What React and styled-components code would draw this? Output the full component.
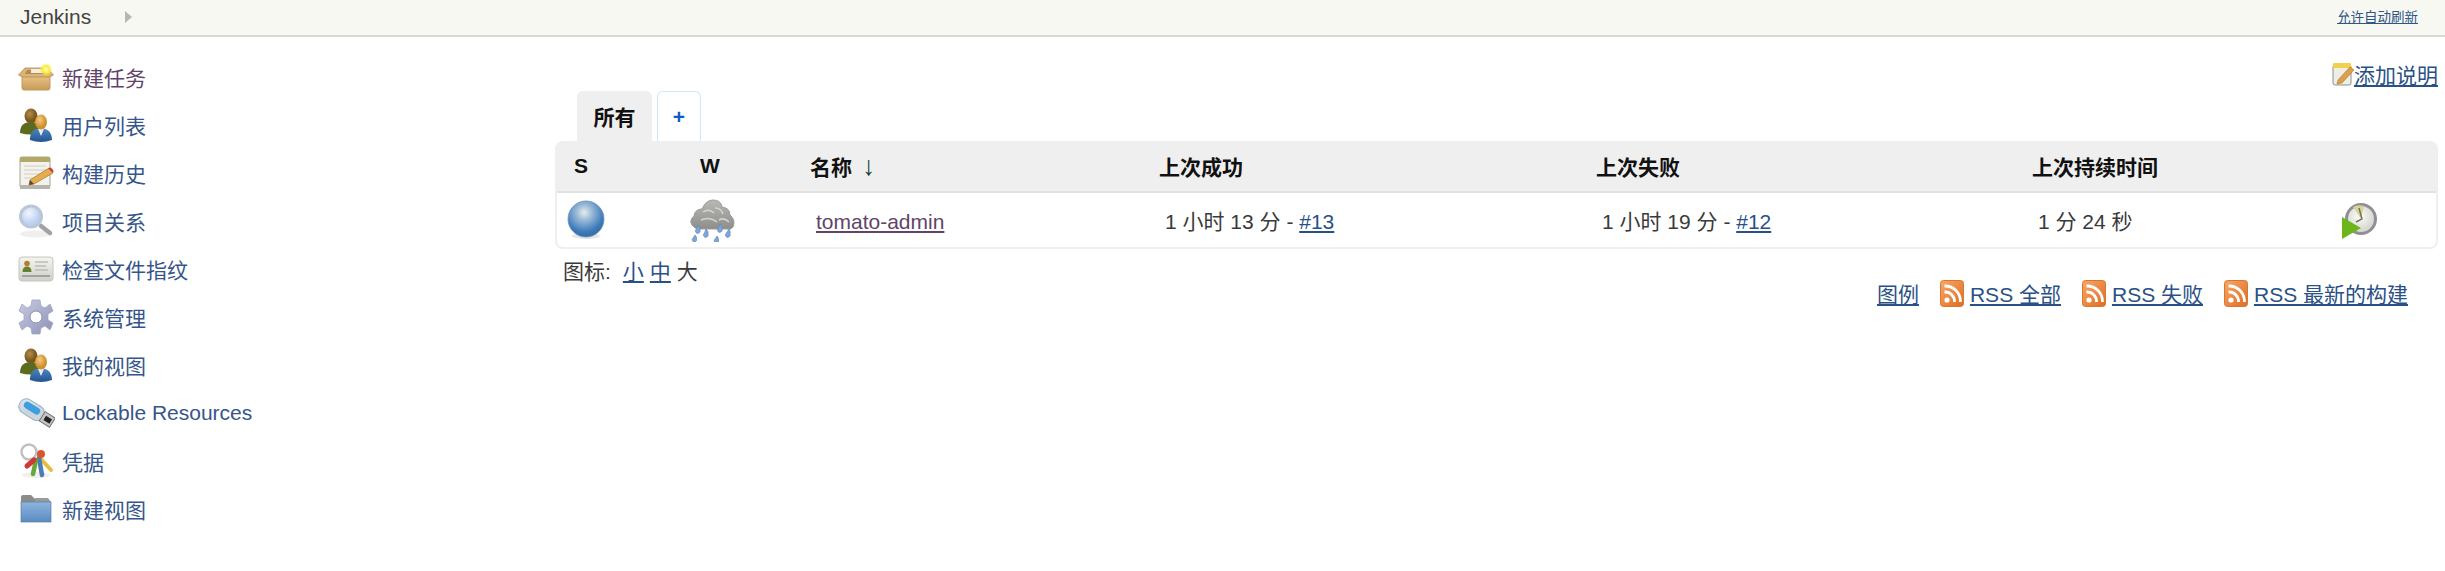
import React from 'react';
import styled, { createGlobalStyle } from 'styled-components';

const GlobalStyle = createGlobalStyle`
  html, body {
    margin: 0;
    padding: 0;
    background: #fff;
  }
  body {
    font-family: "Liberation Sans", "Noto Sans CJK SC", sans-serif;
    color: #3a3a3a;
  }
`;

const Svg = styled.svg`
  display: block;
  flex: none;
`;

const NewJobIcon = () => (
  <Svg width="36" height="28" viewBox="0 0 36 28">
    <defs>
      <linearGradient id="box" x1="0" y1="0" x2="0" y2="1">
        <stop offset="0" stopColor="#ecc98f" />
        <stop offset="1" stopColor="#c99a55" />
      </linearGradient>
      <radialGradient id="spark">
        <stop offset="0" stopColor="#fffcc0" />
        <stop offset="0.55" stopColor="#f6ee3a" />
        <stop offset="1" stopColor="#f6ee3a" stopOpacity="0" />
      </radialGradient>
    </defs>
    <path d="M4 11 H32 V25 Q32 27 30 27 H6 Q4 27 4 25 Z" fill="url(#box)" stroke="#c09a60" />
    <path d="M0.5 12 L7 5 H29 L35.5 12 L31 14 H5 Z" fill="#dcb478" stroke="#b58a4c" strokeWidth="0.8" />
    <path d="M9 7 H27 L29 11 H7 Z" fill="#8f6a3a" opacity="0.55" />
    <path d="M13 6 H24 L25 10 H13 Z" fill="#f3eee0" />
    <circle cx="28" cy="6.5" r="6.5" fill="url(#spark)" />
  </Svg>
);

const PeopleIcon = () => (
  <Svg width="34" height="34" viewBox="0 0 34 34">
    <defs>
      <radialGradient id="headA" cx="0.4" cy="0.35">
        <stop offset="0" stopColor="#b98c48" />
        <stop offset="1" stopColor="#76541c" />
      </radialGradient>
      <radialGradient id="headB" cx="0.4" cy="0.35">
        <stop offset="0" stopColor="#f5cc85" />
        <stop offset="1" stopColor="#d08f2f" />
      </radialGradient>
      <linearGradient id="suit" x1="0" y1="0" x2="0" y2="1">
        <stop offset="0" stopColor="#5587c0" />
        <stop offset="1" stopColor="#1f5592" />
      </linearGradient>
    </defs>
    <ellipse cx="12" cy="8" rx="6.5" ry="7.5" fill="url(#headA)" />
    <path d="M1 25 Q1 14 12 14 Q22 14 22 25 Q12 28 1 25 Z" fill="#5b6b1e" />
    <path d="M11 32 Q10 21 22 20 Q33 21 33 32 Q22 36 11 32 Z" fill="url(#suit)" />
    <path d="M19 21 L22 28 L25 21 Z" fill="#e8eef6" />
    <ellipse cx="22" cy="14" rx="6" ry="7.5" fill="url(#headB)" />
  </Svg>
);

const NotepadIcon = () => (
  <Svg width="36" height="34" viewBox="0 0 36 34">
    <rect x="2" y="1" width="30" height="31" rx="2" fill="#f3f2ec" stroke="#a4a49c" />
    <rect x="2" y="1" width="30" height="5" fill="#b3a866" />
    <path d="M6 10 H28 M6 14 H28 M6 18 H22 M6 22 H16" stroke="#cfcfc8" strokeWidth="1" />
    <rect x="2" y="29" width="30" height="4" fill="#b5b5ae" />
    <path d="M12 24 L31 12 L35 17 L16 28 L11 29 Z" fill="#e5ad4f" stroke="#a87423" strokeWidth="0.7" />
    <path d="M30 12.5 L32 11.5 Q34 11.5 35.5 15 L35 17 Z" fill="#c8443a" />
    <path d="M12 24 L16 28 L11 29 Z" fill="#5c4a32" />
  </Svg>
);

const SearchIcon = () => (
  <Svg width="36" height="34" viewBox="0 0 36 34">
    <defs>
      <radialGradient id="lens" cx="0.4" cy="0.35">
        <stop offset="0" stopColor="#f2f6fe" />
        <stop offset="1" stopColor="#bcd0f0" />
      </radialGradient>
    </defs>
    <ellipse cx="17" cy="30" rx="15" ry="3.5" fill="#efefef" />
    <path d="M23 22 L32 29" stroke="#a2a2a2" strokeWidth="4.5" strokeLinecap="round" />
    <circle cx="13" cy="12.5" r="10.5" fill="url(#lens)" stroke="#bcc6da" strokeWidth="3" />
  </Svg>
);

const FingerprintIcon = () => (
  <Svg width="36" height="26" viewBox="0 0 36 26">
    <defs>
      <linearGradient id="card" x1="0" y1="0" x2="0" y2="1">
        <stop offset="0" stopColor="#f4f4f0" />
        <stop offset="1" stopColor="#d0d0ca" />
      </linearGradient>
    </defs>
    <rect x="1" y="1" width="34" height="24" rx="3" fill="url(#card)" stroke="#c6c6c0" />
    <circle cx="9" cy="7.5" r="2.8" fill="#b07f32" />
    <path d="M4.5 16 Q4.5 10.5 9 10.5 Q13.5 10.5 13.5 16 Z" fill="#67802c" />
    <path d="M17 6 H30 M17 10 H28 M17 14 H30" stroke="#bdbdb6" strokeWidth="1.3" />
    <path d="M4 20 H32" stroke="#a2a29c" strokeWidth="2" />
  </Svg>
);

const GearIcon = () => (
  <Svg width="36" height="36" viewBox="0 0 36 36">
    <defs>
      <linearGradient id="gear" x1="0" y1="0" x2="1" y2="1">
        <stop offset="0" stopColor="#c9cbe2" />
        <stop offset="1" stopColor="#8d91b4" />
      </linearGradient>
    </defs>
    <path
      d="M14 1 H22 L23 7 L27 9 L32 5 L35 12 L30 15 V21 L35 24 L32 31 L27 27 L23 29 L22 35 H14 L13 29 L9 27 L4 31 L1 24 L6 21 V15 L1 12 L4 5 L9 9 L13 7 Z"
      fill="url(#gear)"
      stroke="#a2a5c2"
      strokeWidth="0.8"
      strokeLinejoin="round"
    />
    <circle cx="18" cy="18" r="6" fill="#fff" stroke="#8c90b2" />
  </Svg>
);

const UsbIcon = () => (
  <Svg width="37" height="33" viewBox="0 0 37 33">
    <defs>
      <linearGradient id="usb" x1="0" y1="0" x2="1" y2="1">
        <stop offset="0" stopColor="#dcebf8" />
        <stop offset="0.6" stopColor="#c8d4de" />
        <stop offset="1" stopColor="#d8d8d8" />
      </linearGradient>
    </defs>
    <g transform="rotate(32 18 16)">
      <rect x="-1" y="8" width="27" height="15" rx="7" fill="url(#usb)" stroke="#9ab0c2" />
      <rect x="3" y="10.5" width="18" height="7" rx="3.5" fill="#3f9fdd" />
      <rect x="25" y="10" width="12" height="11" fill="#c4c4c4" stroke="#777" />
      <rect x="28" y="13" width="7" height="5" fill="#222" />
    </g>
  </Svg>
);

const KeysIcon = () => (
  <Svg width="36" height="36" viewBox="0 0 36 36">
    <ellipse cx="18" cy="32" rx="14" ry="3" fill="#f0f0f0" />
    <circle cx="11" cy="9" r="7.5" fill="none" stroke="#c0c0c0" strokeWidth="2.5" />
    <path d="M22 15 L33 27" stroke="#e2bf3e" strokeWidth="4" strokeLinecap="round" />
    <path d="M21 15 L24 32" stroke="#4c7cb4" strokeWidth="4.5" strokeLinecap="round" />
    <path d="M18 17 L15 31" stroke="#68a83a" strokeWidth="4.5" strokeLinecap="round" />
    <path d="M16 17 L9 23" stroke="#cf3b34" strokeWidth="5" strokeLinecap="round" />
    <circle cx="23" cy="11" r="4" fill="#d9572c" />
  </Svg>
);

const FolderIcon = () => (
  <Svg width="32" height="28" viewBox="0 0 32 28">
    <defs>
      <linearGradient id="folder" x1="0" y1="0" x2="0" y2="1">
        <stop offset="0" stopColor="#8db4de" />
        <stop offset="1" stopColor="#5a8cc0" />
      </linearGradient>
    </defs>
    <path d="M1 2 Q1 0 3 0 H11 L15 4 V10 H1 Z" fill="#8b8b8b" />
    <path d="M15 3 H28 L31 7 H15 Z" fill="#9a9a9a" />
    <rect x="1" y="7" width="30" height="20" fill="url(#folder)" stroke="#5f7fa0" strokeWidth="0.7" />
  </Svg>
);

const BallIcon = () => (
  <Svg width="38" height="40" viewBox="0 0 38 40">
    <defs>
      <radialGradient id="ball" cx="0.45" cy="0.32" r="0.7">
        <stop offset="0" stopColor="#e6ecec" />
        <stop offset="0.3" stopColor="#9dbbd8" />
        <stop offset="0.75" stopColor="#3f7cbc" />
        <stop offset="1" stopColor="#33689f" />
      </radialGradient>
    </defs>
    <ellipse cx="19" cy="36" rx="14" ry="3" fill="#e5e5e5" />
    <circle cx="19" cy="19" r="18" fill="url(#ball)" stroke="#6f94b8" strokeWidth="0.8" />
  </Svg>
);

const CloudIcon = () => (
  <Svg width="46" height="44" viewBox="0 0 46 44">
    <defs>
      <linearGradient id="cloud" x1="0" y1="0" x2="0" y2="1">
        <stop offset="0" stopColor="#b8b8b4" />
        <stop offset="1" stopColor="#8d8d8a" />
      </linearGradient>
    </defs>
    <path
      d="M6 30 Q-2 24 5 18 Q6 11 13 11 Q17 2 24 2 Q32 2 33 9 Q41 10 41 17 Q47 22 44 29 Q42 32 38 31 H10 Z"
      fill="url(#cloud)"
      stroke="#9c9c98"
    />
    <path d="M14 14 Q20 10 25 15 M26 10 Q32 10 34 16 M12 22 Q20 18 28 24 M30 22 Q35 19 40 24" fill="none" stroke="#d4d4d0" strokeWidth="1.5" />
    <g fill="#7ea6d8" stroke="#5c84b8" strokeWidth="0.6">
      <path d="M9 27 q3 3 2 5 a2.4 2.4 0 1 1 -3.6 -1 z" />
      <path d="M17 31 q3 3 2 5 a2.4 2.4 0 1 1 -3.6 -1 z" />
      <path d="M31 26 q3 3 2 5 a2.4 2.4 0 1 1 -3.6 -1 z" />
      <path d="M40 31 q2 3 1 5 a2.4 2.4 0 1 1 -3.6 -1 z" />
      <path d="M6 37 q2 2 1.5 4 a2.2 2.2 0 1 1 -3.4 -1 z" />
      <path d="M28 38 q2 2 1.5 4 a2.2 2.2 0 1 1 -3.4 -1 z" />
    </g>
  </Svg>
);

const ClockIcon = () => (
  <Svg width="36" height="38" viewBox="0 0 36 38">
    <defs>
      <radialGradient id="clock" cx="0.45" cy="0.4">
        <stop offset="0" stopColor="#fdfdfb" />
        <stop offset="1" stopColor="#d8d8d0" />
      </radialGradient>
    </defs>
    <circle cx="20" cy="17" r="14.5" fill="url(#clock)" stroke="#8f8f98" strokeWidth="3" />
    <path d="M20 17 L12 5 A14 14 0 0 1 23 4 Z" fill="#d8d49a" />
    <path d="M18 6 L21 17 L15 20" fill="none" stroke="#6f6f5a" strokeWidth="1.4" />
    <path d="M1 15 L20 26 L1 37 Z" fill="#6cb51a" />
  </Svg>
);

const RssIcon = () => (
  <Svg width="24" height="27" viewBox="0 0 24 27">
    <defs>
      <linearGradient id="rss" x1="0" y1="0" x2="1" y2="1">
        <stop offset="0" stopColor="#f7a867" />
        <stop offset="1" stopColor="#e06c22" />
      </linearGradient>
    </defs>
    <rect x="0.5" y="0.5" width="23" height="26" rx="3" fill="url(#rss)" stroke="#d8772f" />
    <circle cx="7" cy="20" r="2.6" fill="#fff" />
    <path d="M4.5 12 A 9.5 9.5 0 0 1 14.5 22 M4.5 6 A 15.5 15.5 0 0 1 20.5 22" fill="none" stroke="#fff" strokeWidth="2.8" />
  </Svg>
);

const NoteIcon = () => (
  <Svg width="22" height="24" viewBox="0 0 22 24">
    <rect x="1" y="3" width="18" height="20" rx="2" fill="#efeee6" stroke="#8f8f8a" />
    <rect x="1" y="1" width="18" height="5" rx="1" fill="#f1cf4f" />
    <path d="M6 18 L18 5 L22 8 L10 21 L5 22 Z" fill="#dca048" stroke="#9a6a20" strokeWidth="0.5" />
  </Svg>
);

const TopBar = styled.header`
  display: flex;
  align-items: center;
  justify-content: space-between;
  height: 35px;
  padding: 0 27px 0 20px;
  background: #f6f8f1;
  border-bottom: 2px solid #d8dad2;
`;

const Crumb = styled.span`
  display: flex;
  align-items: center;
  gap: 34px;
  padding-bottom: 1px;
  font-size: 21px;
  color: #444;
`;

const CrumbArrow = styled.i`
  width: 0;
  height: 0;
  border-left: 7px solid #b4b8b0;
  border-top: 6px solid transparent;
  border-bottom: 6px solid transparent;
`;

const RefreshLink = styled.a`
  padding-bottom: 4px;
  font-size: 13.5px;
  color: #2f5688;
  text-decoration: underline;
`;

const Body = styled.div`
  display: flex;
  padding-right: 7px;
`;

const Sidebar = styled.nav`
  flex: none;
  width: 555px;
  padding-top: 16px;
`;

const Task = styled.a`
  display: flex;
  align-items: center;
  height: 48px;
  font-size: 21px;
  color: ${(props) => (props.$visited ? '#5f4468' : '#36568a')};
`;

const TaskIcon = styled.span`
  display: flex;
  align-items: center;
  justify-content: center;
  width: 36px;
  margin-left: 18px;
  margin-right: 8px;
`;

const Main = styled.main`
  flex: 1;
  min-width: 0;
`;

const DescRow = styled.div`
  display: flex;
  justify-content: flex-end;
  align-items: center;
  height: 28px;
  margin-top: 23px;
`;

const BlueLink = styled.a`
  color: #2a5186;
  text-decoration: underline;
  font-size: 21px;
`;

const Tabs = styled.div`
  display: flex;
  align-items: flex-end;
  gap: 5px;
  height: 50px;
  margin-top: 3px;
  padding-left: 22px;
`;

const Tab = styled.div`
  display: flex;
  align-items: center;
  justify-content: center;
  height: 50px;
  box-sizing: border-box;
  border-radius: 6px 6px 0 0;
  font-weight: 700;
  font-size: 21px;
  color: ${(props) => (props.$active ? '#111' : '#0b5cc4')};
  width: ${(props) => (props.$active ? '75px' : '44px')};
  background: ${(props) => (props.$active ? '#efefef' : '#fff')};
  border: ${(props) => (props.$active ? 'none' : '1.5px solid #d3e5f8')};
  border-bottom: none;
`;

const Table = styled.table`
  width: 100%;
  table-layout: fixed;
  border-collapse: separate;
  border-spacing: 0;
  border: 2px solid #efefef;
  border-top: none;
  border-radius: 8px;
  font-size: 21px;
`;

const HeadCell = styled.th`
  height: 50px;
  padding: 0 0 0 ${(props) => props.$pad || 0}px;
  text-align: left;
  font-size: 21px;
  font-weight: 700;
  color: #111;
  background: #efefef;
  border-bottom: 2px solid #e2e2e2;
  &:first-child {
    border-top-left-radius: 6px;
  }
  &:last-child {
    border-top-right-radius: 6px;
  }
`;

const Cell = styled.td`
  box-sizing: border-box;
  height: 54px;
  padding: ${(props) => props.$top || 0}px 0 0 ${(props) => props.$pad || 0}px;
  color: #3a3a3a;
  vertical-align: middle;
`;

const SortArrow = styled.span`
  margin-left: 10px;
  font-size: 27px;
  line-height: 20px;
  font-weight: 400;
  color: #1c4034;
`;

const JobLink = styled.a`
  color: #5f4468;
  text-decoration: underline;
`;

const Footer = styled.div`
  display: flex;
  align-items: flex-start;
  justify-content: space-between;
  padding: 6px 30px 0 8px;
`;

const IconSizes = styled.div`
  display: flex;
  gap: 6px;
  font-size: 21px;
  color: #3a3a3a;
`;

const IconLabel = styled.span`
  margin-right: 6px;
`;

const Links = styled.div`
  display: flex;
  align-items: center;
  gap: 21px;
  margin-top: 23px;
`;

const RssItem = styled.span`
  display: flex;
  align-items: center;
  gap: 6px;
`;

const tasks = [
  { label: '新建任务', icon: <NewJobIcon />, visited: true },
  { label: '用户列表', icon: <PeopleIcon /> },
  { label: '构建历史', icon: <NotepadIcon /> },
  { label: '项目关系', icon: <SearchIcon /> },
  { label: '检查文件指纹', icon: <FingerprintIcon /> },
  { label: '系统管理', icon: <GearIcon /> },
  { label: '我的视图', icon: <PeopleIcon /> },
  { label: 'Lockable Resources', icon: <UsbIcon /> },
  { label: '凭据', icon: <KeysIcon /> },
  { label: '新建视图', icon: <FolderIcon /> },
];

const App = () => (
  <>
    <GlobalStyle />
    <TopBar>
      <Crumb>
        Jenkins
        <CrumbArrow />
      </Crumb>
      <RefreshLink>允许自动刷新</RefreshLink>
    </TopBar>
    <Body>
      <Sidebar>
        {tasks.map((task) => (
          <Task key={task.label} $visited={task.visited}>
            <TaskIcon>{task.icon}</TaskIcon>
            {task.label}
          </Task>
        ))}
      </Sidebar>
      <Main>
        <DescRow>
          <NoteIcon />
          <BlueLink>添加说明</BlueLink>
        </DescRow>
        <Tabs>
          <Tab $active>所有</Tab>
          <Tab>+</Tab>
        </Tabs>
        <Table>
          <colgroup>
            <col style={{ width: 126 }} />
            <col style={{ width: 110 }} />
            <col style={{ width: 349 }} />
            <col style={{ width: 437 }} />
            <col style={{ width: 436 }} />
            <col style={{ width: 288 }} />
            <col />
          </colgroup>
          <thead>
            <tr>
              <HeadCell $pad={17}>S</HeadCell>
              <HeadCell $pad={17}>W</HeadCell>
              <HeadCell $pad={17}>
                名称<SortArrow>↓</SortArrow>
              </HeadCell>
              <HeadCell $pad={17}>上次成功</HeadCell>
              <HeadCell $pad={17}>上次失败</HeadCell>
              <HeadCell $pad={17}>上次持续时间</HeadCell>
              <HeadCell />
            </tr>
          </thead>
          <tbody>
            <tr>
              <Cell $pad={10}>
                <BallIcon />
              </Cell>
              <Cell $pad={6}>
                <CloudIcon />
              </Cell>
              <Cell $pad={23} $top={3}>
                <JobLink>tomato-admin</JobLink>
              </Cell>
              <Cell $pad={23}>
                1 小时 13 分 - <BlueLink>#13</BlueLink>
              </Cell>
              <Cell $pad={23}>
                1 小时 19 分 - <BlueLink>#12</BlueLink>
              </Cell>
              <Cell $pad={23}>1 分 24 秒</Cell>
              <Cell $pad={38} $top={2}>
                <ClockIcon />
              </Cell>
            </tr>
          </tbody>
        </Table>
        <Footer>
          <IconSizes>
            <IconLabel>图标:</IconLabel>
            <BlueLink>小</BlueLink>
            <BlueLink>中</BlueLink>
            <span>大</span>
          </IconSizes>
          <Links>
            <BlueLink>图例</BlueLink>
            <RssItem>
              <RssIcon />
              <BlueLink>RSS 全部</BlueLink>
            </RssItem>
            <RssItem>
              <RssIcon />
              <BlueLink>RSS 失败</BlueLink>
            </RssItem>
            <RssItem>
              <RssIcon />
              <BlueLink>RSS 最新的构建</BlueLink>
            </RssItem>
          </Links>
        </Footer>
      </Main>
    </Body>
  </>
);

export default App;
